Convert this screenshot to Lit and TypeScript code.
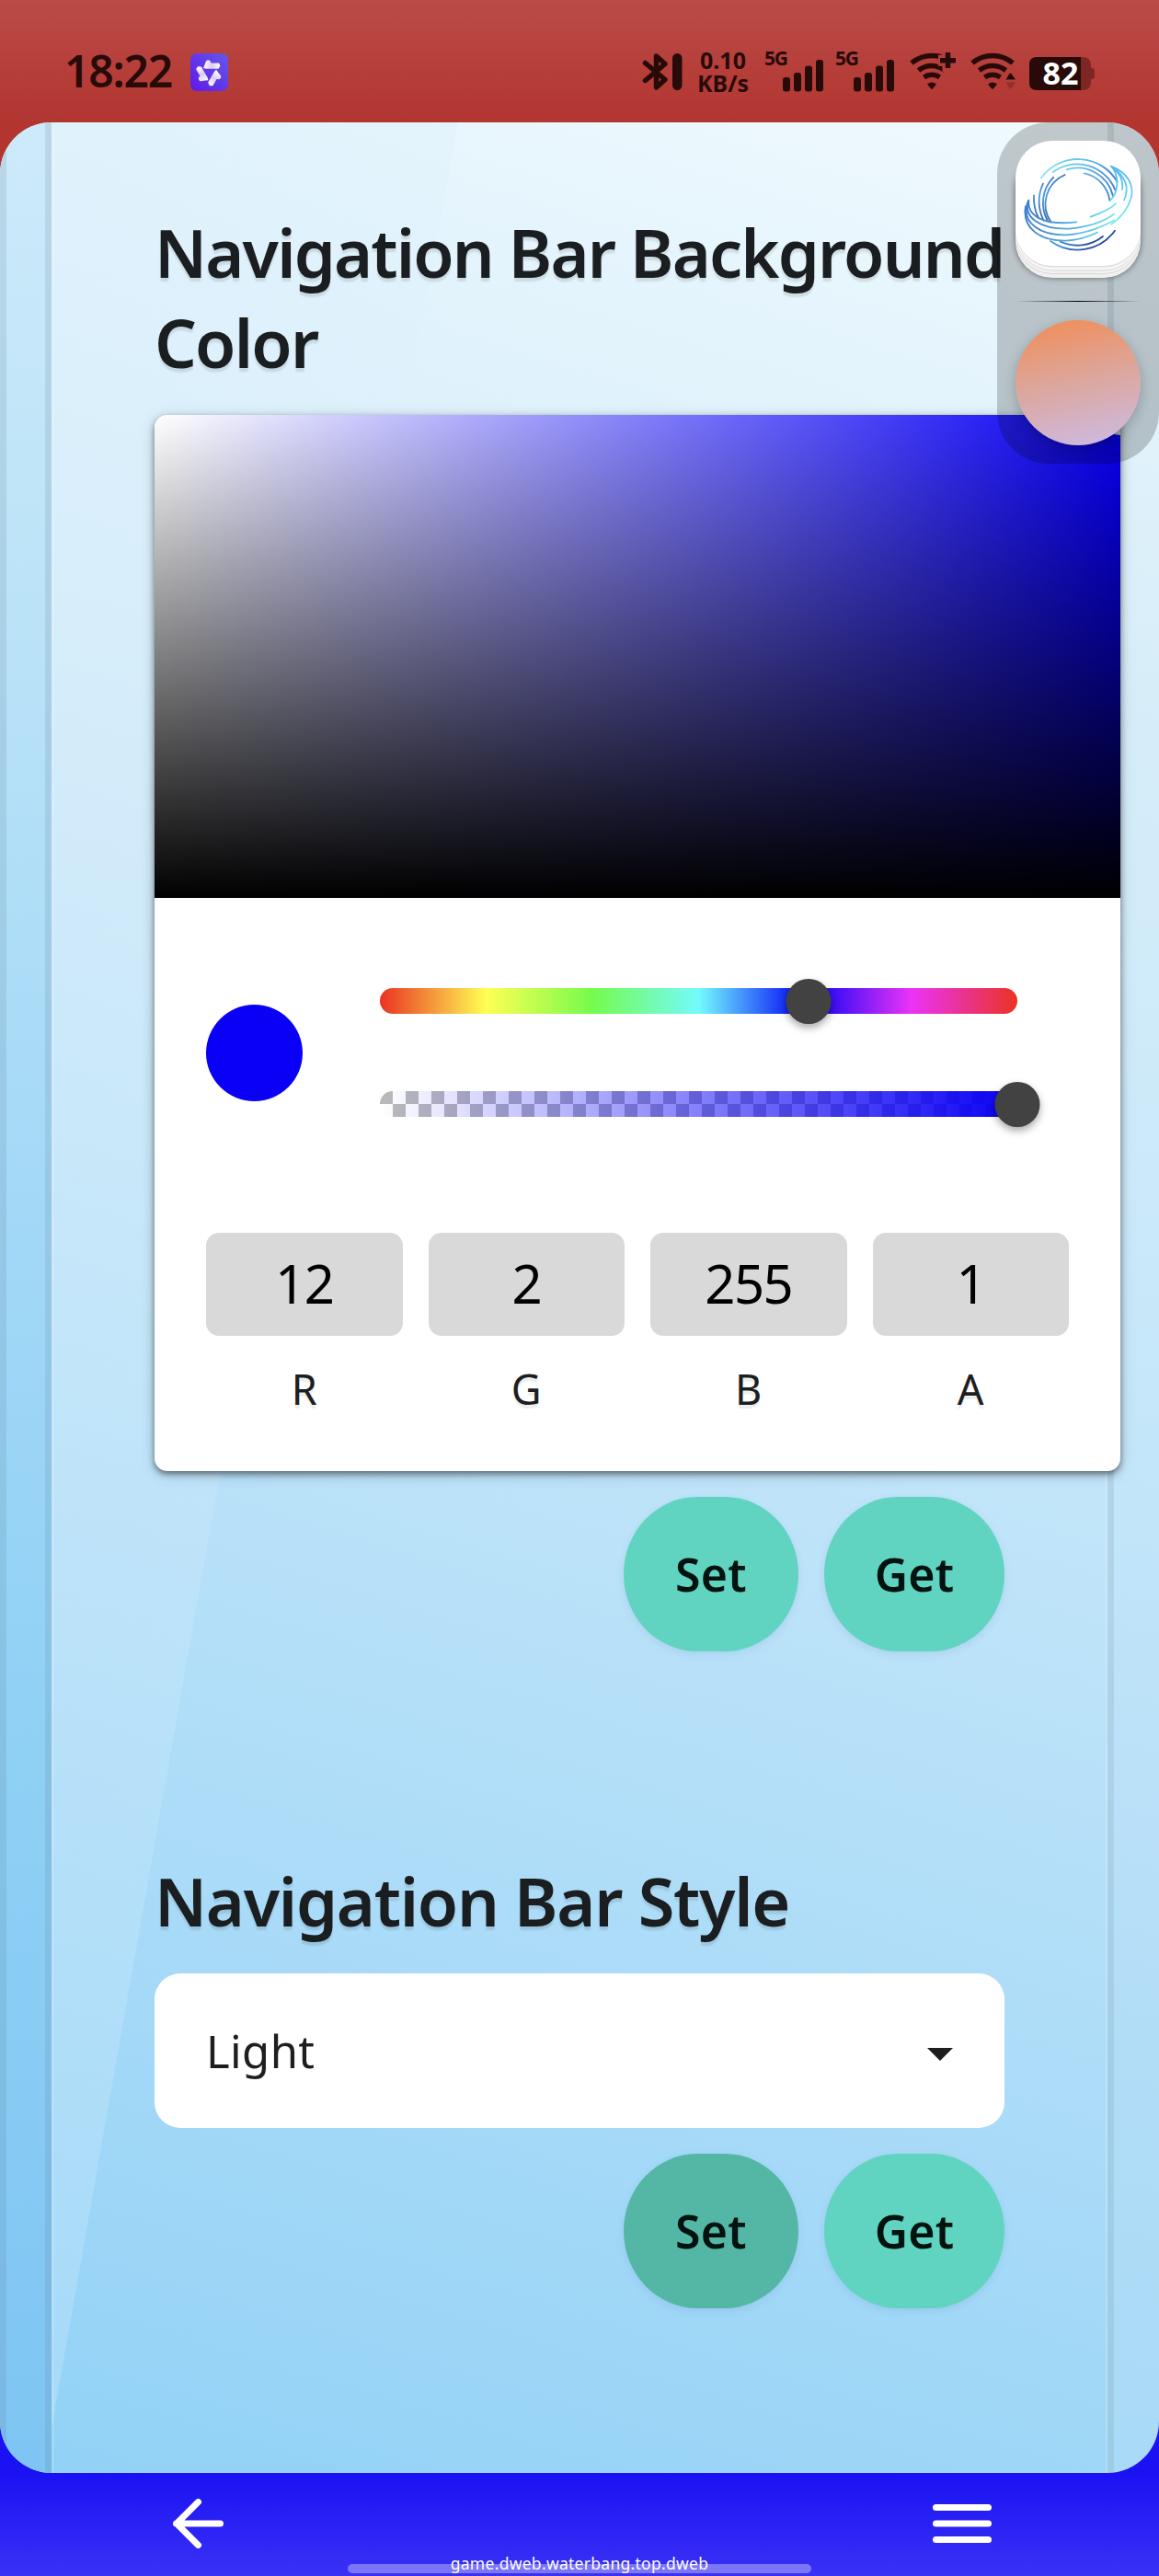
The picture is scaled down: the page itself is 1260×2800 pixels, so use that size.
import { LitElement, html, css, svg } from "lit";
import { customElement, property } from "lit/decorators.js";

/** Cellular strength indicator with a network generation label. */
const cellular = html`<svg class="cell" width="77" height="50" viewBox="0 0 77 50">
  <text x="0" y="21" font-size="21" textLength="26">5G</text>
  <g class="ink">
    <rect x="20" y="34" width="8" height="15.5" rx="3" />
    <rect x="32" y="29" width="8" height="20.5" rx="3" />
    <rect x="44" y="21.5" width="8" height="28" rx="3" />
    <rect x="56" y="15" width="8" height="34.5" rx="3" />
  </g>
</svg>`;

const wifiArcs = svg`
  <path d="M2 11.5A34 34 0 0 1 46 11.5" />
  <path d="M9.5 19.5A23.5 23.5 0 0 1 38.5 19.5" />
  <path d="M15.500 27A15 15 0 0 1 32.500 27" />
  <path class="solid" d="M19 34.500Q24 30.500 29 34.500L24.800 39.500Q24 40.300 23.200 39.500Z" />`;

@customElement("status-bar")
class StatusBar extends LitElement {
  static styles = css`
    :host {
      display: flex;
      align-items: flex-start;
      height: 133px;
      box-sizing: border-box;
      padding-left: 70px;
      background: linear-gradient(#bb4b47, #b23530);
      color: #280b09;
      font-family: "Noto Sans", sans-serif;
    }
    .time { width: 137px; margin-top: 47px; font-size: 48px; font-weight: 600; line-height: 60px; letter-spacing: -1.200px; }
    svg { display: block; flex: none; overflow: visible; }
    .app { margin-top: 58px; }
    .bt { margin: 58px 0 0 451px; }
    text { fill: #280b09; font-weight: 700; }
    .net { margin: 53px 0 0 20px; }
    .cell { margin-top: 50px; }
    .first { display: flex; margin-left: 15px; }
    .ink { fill: #280b09; }
    .line { fill: none; stroke: #280b09; stroke-width: 5.500; }
    .solid { fill: #280b09; stroke: none; }
    .wifi { margin: 57px 0 0 4px; }
    .wifi2 { margin: 57px 0 0 14px; }
    .battery { margin: 62px 0 0 14px; }
    .battery text { fill: #fff; }
  `;
  render() {
    return html`
      <span class="time">18:22</span>
      <svg class="app" width="41" height="41" viewBox="0 0 41 41">
        <defs>
          <linearGradient id="p" x1="0" y1="1" x2="1" y2="0"><stop stop-color="#6018e8" /><stop offset="1" stop-color="#6558ea" /></linearGradient>
          <linearGradient id="w" x1="0" y1="0" x2="1" y2="0"><stop stop-color="#fff" /><stop offset=".5" stop-color="#d9cdfb" /><stop offset="1" stop-color="#fff" /></linearGradient>
        </defs>
        <rect width="41" height="41" rx="7" fill="url(#p)" />
        <g fill="url(#w)">
          ${[0, 120, 240].map((a) => svg`<path transform="rotate(${a} 20.500 21)" d="M14 16L15.500 12.500L17 8.500Q19 6.500 21.500 8L22.500 10.500H31L32.500 13.500L30.500 16.800H17Z" />`)}
        </g>
      </svg>
      <svg class="bt" width="43" height="40" viewBox="0 0 43 40">
        <path class="line" stroke-linejoin="round" stroke-linecap="round" d="M2.500 10.500L24 28.500L14.500 37V3L24 11.500L2.500 29.500" />
        <rect class="ink" x="32" y="0" width="10.500" height="40" rx="5.200" />
      </svg>
      <svg class="net" width="54" height="50" viewBox="0 0 54 50">
        <text x="-1" y="22.300" font-size="25" textLength="50" lengthAdjust="spacingAndGlyphs">0.10</text>
        <text x="-4" y="47.300" font-size="25" textLength="56" lengthAdjust="spacingAndGlyphs">KB/s</text>
      </svg>
      <div class="first">${cellular}${cellular}</div>
      <svg class="wifi" width="52" height="40" viewBox="0 0 52 40">
        <defs><mask id="m"><rect x="-5" width="60" height="45" fill="#fff" /><path d="M31 8.700H54M41.500 -2V21" stroke="#000" stroke-width="12" /></mask></defs>
        <g class="line" mask="url(#m)">${wifiArcs}</g>
        <path class="line" d="M33 8.700H50M41.500 0V17" />
      </svg>
      <svg class="wifi2" width="50" height="40" viewBox="0 0 50 40">
        <defs><mask id="n"><rect x="-5" width="60" height="45" fill="#fff" /><path d="M32 29L41 18L50 29V42H32Z" fill="#000" /></mask></defs>
        <g class="line" mask="url(#n)">${wifiArcs}</g>
        <path class="ink" d="M38.500 29.500L42.500 23Q43.500 22 44.500 23L49 29.500Z" />
        <path class="ink" opacity=".25" d="M38.500 32.500H49L44.500 39Q43.500 40 42.500 39Z" />
      </svg>
      <svg class="battery" width="72" height="36" viewBox="0 0 72 36">
        <path fill="#7d2624" d="M50 0H58Q67 0 67 9V11.500Q71 12 71 15V21Q71 24 67 24.500V27Q67 36 58 36H50Z" />
        <path class="ink" d="M8 0H56V36H8Q0 36 0 28V8Q0 0 8 0Z" />
        <text x="14.500" y="30.300" font-size="34" textLength="39" lengthAdjust="spacingAndGlyphs">82</text>
      </svg>`;
  }
}

@customElement("pill-button")
class PillButton extends LitElement {
  @property({ type: Boolean, reflect: true }) pressed = false;
  static styles = css`
    :host {
      display: flex;
      align-items: center;
      justify-content: center;
      box-sizing: border-box;
      width: 190px;
      height: 168px;
      border-radius: 80px / 84px;
      background: #60d4c0;
      color: #02120e;
      font-size: 50px;
      font-weight: 600;
      letter-spacing: 0.3px;
      box-shadow: 0 3px 8px rgba(70, 110, 170, 0.13);
    }
    :host([wide]) { width: 196px; }
    :host([pressed]) { background: #54b7a6; }
  `;
  render() {
    return html`<slot></slot>`;
  }
}

@customElement("color-picker")
class ColorPicker extends LitElement {
  static styles = css`
    :host {
      position: relative;
      display: block;
      width: 1050px;
      height: 1148px;
      border-radius: 14px;
      background: #fff;
      box-shadow: 0 3px 7px rgba(0, 0, 0, 0.5), 0 4px 18px rgba(0, 0, 0, 0.14);
    }
    .area {
      position: relative;
      height: 525px;
      overflow: hidden;
      border-radius: 14px 14px 0 0;
      background: linear-gradient(to top, #000, transparent), linear-gradient(to right, #fff, rgba(255, 255, 255, 0)), #0800f5;
    }
    .handle { position: absolute; right: -22px; top: -22px; width: 44px; height: 44px; border-radius: 50%; background: #c9c9c9; }
    .body { padding: 56px 56px 0; }
    .controls { display: flex; align-items: center; gap: 84px; height: 224px; }
    .swatch { width: 105px; height: 105px; border-radius: 50%; background: #0a00f5; }
    .sliders { width: 693px; }
    .slot { display: flex; align-items: center; height: 112px; }
    .track { position: relative; width: 693px; height: 28px; border-radius: 14px; }
    .hue { background: linear-gradient(to right, #ea3323, #ffff54 16.700%, #75fb4c 33.300%, #73fbfd 50%, #0000f5 66.700%, #ea33f7 83.300%, #ea3323); }
    .alpha {
      background: linear-gradient(to right, rgba(10, 0, 245, 0), #0a00f5),
        repeating-conic-gradient(#fff 0 25%, #bbb 0 50%) 0 0 / 28px 28px;
    }
    .thumb { position: absolute; top: -10.500px; width: 49px; height: 49px; border-radius: 50%; background: #424242; transform: translateX(-50%); box-shadow: 0 4px 8px rgba(0, 0, 0, 0.35); }
    .fields { display: grid; grid-template-columns: repeat(4, 1fr); gap: 28px; margin-top: 84px; }
    .value { height: 112px; box-sizing: border-box; border-radius: 14px; background: #d9d9d9; color: #000; text-align: center; font-size: 58px; line-height: 110px; letter-spacing: -1.500px; }
    .label { margin-top: 28px; text-align: center; font-size: 45px; line-height: 60px; color: #1d1e1f; text-shadow: 0 4px 1px rgba(0, 0, 0, 0.07); }
  `;
  render() {
    const channels = [["12", "R"], ["2", "G"], ["255", "B"], ["1", "A"]];
    return html`
      <div class="area"><div class="handle"></div></div>
      <div class="body">
        <div class="controls">
          <div class="swatch"></div>
          <div class="sliders">
            <div class="slot"><div class="track hue"><div class="thumb" style="left:67.300%"></div></div></div>
            <div class="slot"><div class="track alpha"><div class="thumb" style="left:100%"></div></div></div>
          </div>
        </div>
        <div class="fields">
          ${channels.map(([v, l]) => html`<div><div class="value">${v}</div><div class="label">${l}</div></div>`)}
        </div>
      </div>`;
  }
}

@customElement("floating-dock")
class FloatingDock extends LitElement {
  static styles = css`
    :host {
      display: flex;
      flex-direction: column;
      align-items: center;
      box-sizing: border-box;
      width: 176px;
      height: 371px;
      padding-top: 20px;
      border-radius: 56px;
      background: rgba(0, 0, 0, 0.2);
    }
    .icon {
      width: 136px;
      height: 136px;
      border-radius: 40px;
      background: #fff;
      box-shadow: 0 1.500px 0 #dedede, 0 4.500px 0 #f6f6f6, 0 5.500px 0 #dadada, 0 8px 0 #f3f3f3, 0 9px 0 #d7d7d7, 0 13px 0 #f0f0f0, 0 13px 6px rgba(0, 0, 0, 0.5);
    }
    svg { display: block; fill: none; stroke-width: 5.500; stroke-linecap: round; }
    .rule { width: 136px; height: 1.500px; margin: 37.500px 0 20px; background: linear-gradient(to right, transparent, #000, transparent); }
    .orb { width: 136px; height: 136px; border-radius: 50%; background: linear-gradient(168deg, #ef9060 8%, #dda598 45%, #cdbbe4 98%); box-shadow: 0 4px 14px rgba(0, 0, 0, 0.22); }
  `;
  render() {
    return html`
      <div class="icon">
        <svg width="136" height="136" viewBox="132 128 408 408">
          <defs>
            <linearGradient id="a" gradientUnits="userSpaceOnUse" x1="215" y1="240" x2="455" y2="300"><stop stop-color="#7fe6f5" /><stop offset=".55" stop-color="#62b8e6" /><stop offset="1" stop-color="#3c7cd0" /></linearGradient>
            <linearGradient id="b" gradientUnits="userSpaceOnUse" x1="280" y1="240" x2="230" y2="395"><stop stop-color="#3e74c4" /><stop offset=".5" stop-color="#4f9ae0" /><stop offset="1" stop-color="#3465b4" /></linearGradient>
            <linearGradient id="c" gradientUnits="userSpaceOnUse" x1="165" y1="380" x2="460" y2="400"><stop stop-color="#3b7dd0" /><stop offset=".5" stop-color="#55a9e0" /><stop offset="1" stop-color="#80e8f6" /></linearGradient>
            <linearGradient id="d" gradientUnits="userSpaceOnUse" x1="450" y1="210" x2="490" y2="390"><stop stop-color="#4fb4ee" /><stop offset="1" stop-color="#80eaf6" /></linearGradient>
            <linearGradient id="e" gradientUnits="userSpaceOnUse" x1="245" y1="0" x2="456" y2="0"><stop stop-color="#4aa0dd" /><stop offset=".5" stop-color="#2c55a8" /><stop offset="1" stop-color="#27479a" /></linearGradient>
          </defs>
          <g stroke="url(#a)">
            <path d="M216 249A148 148 0 0 1 464 262" />
            <path d="M254 230A134 134 0 0 1 457 288" />
            <path d="M299 222A119 119 0 0 1 450 308" />
            <path d="M356 234A104 104 0 0 1 439 322" />
          </g>
          <g stroke="url(#b)">
            <path d="M293 239A104 104 0 0 0 248 394" />
            <path d="M256 247A119 119 0 0 0 238 391" />
            <path d="M222 268A134 134 0 0 0 224 388" />
            <path d="M192 306A148 148 0 0 0 207 380" />
          </g>
          <g stroke="url(#c)">
            <path d="M175 322C170 375 225 405 331 393" />
            <path d="M174 324C158 382 215 419 305 417C375 412 423 389 459 333" stroke-opacity="0" />
            <path d="M174 324C158 382 215 419 305 415C365 411 415 389 439 366" stroke-opacity="0" />
            <path d="M174 324C156 380 215 417 305 415C362 410 415 395 453 367" />
            <path d="M171 330C150 398 216 437 296 435C370 431 420 405 453 388" />
            <path d="M165 342C153 412 210 455 296 454C337 452 372 440 399 427" />
            <path d="M377 376C410 364 440 352 459 333" />
          </g>
          <g stroke="url(#d)">
            <path d="M443 211C497 232 520 271 509 314C499 351 476 378 445 400" />
            <path d="M447 215C490 242 505 280 486 322" />
            <path d="M450 217C476 237 484 258 480 287" />
            <path d="M450 216C472 256 466 298 440 324" />
          </g>
          <g stroke="url(#e)">
            <path d="M246 455A150 150 0 0 0 456 421" />
            <path d="M278 457A134 134 0 0 0 417 440" />
          </g>
        </svg>
      </div>
      <div class="rule"></div>
      <div class="orb"></div>`;
  }
}

@customElement("app-root")
class AppRoot extends LitElement {
  static styles = css`
    :host { display: block; width: 1260px; height: 2800px; overflow: hidden; font-family: "Noto Sans", sans-serif; }
    .frame { height: 2555px; background: linear-gradient(#b23530 50%, #1a12f3 50%); }
    .screen {
      position: relative;
      display: flex;
      height: 2555px;
      overflow: hidden;
      border-radius: 56px;
      background: linear-gradient(195deg, #eef8fd 0%, #d8eef9 20%, #c8e8fa 45%, #b0dcf7 75%, #a2d8f6 100%);
    }
    .edge { flex: none; width: 42px; border: 0 solid rgba(90, 120, 140, 0.16); border-width: 0 7px; background: linear-gradient(#cdeafa, #c0e5f8 15%, #a4d9f7 45%, #8fd0f5 70%, #7ec5f3); background-clip: border-box; background-origin: border-box; }
    .panel {
      box-sizing: border-box;
      flex: none;
      width: 1148px;
      padding: 92px 112px 0;
      background: linear-gradient(197deg, #f0fafe 0%, #e2f3fc 14%, #d2ebfa 34%, #bfe4f9 55%, #aadbf8 76%, #92d2f6 100%);
      position: relative;
      box-shadow: inset -2px 0 rgba(255, 255, 255, 0.2), inset 3px 0 rgba(255, 255, 255, 0.12);
    }
    .right { flex: 1; border-left: 7px solid rgba(100, 130, 150, 0.16); background: transparent; }
    .ray { position: absolute; inset: 0; }
    .content { position: relative; }
    h2 { margin: 0 0 30px; font-size: 72px; font-weight: 600; line-height: 98px; letter-spacing: -1.820px; color: #1b1e20; text-shadow: 0 4px 2px rgba(0, 0, 0, 0.1); white-space: nowrap; }
    .second { margin-top: 222px; letter-spacing: -1.250px; }
    .actions { display: flex; justify-content: flex-end; gap: 28px; margin-top: 28px; }
    .select { display: flex; align-items: center; justify-content: space-between; box-sizing: border-box; height: 168px; padding: 0 56px; border-radius: 28px; background: #fff; font-size: 49px; color: #1d1e1f; letter-spacing: 0.400px; }
    .select svg { margin-top: 8px; }
    .dock { position: absolute; top: 0; right: 0; }
    .nav {
      position: relative;
      display: flex;
      justify-content: space-between;
      box-sizing: border-box;
      height: 112px;
      padding: 28px 182px 0 188px;
      background: linear-gradient(#1a12f3, #3a31f5);
    }
    .nav svg { display: block; fill: none; stroke: #fff; stroke-width: 7; stroke-linecap: round; stroke-linejoin: round; }
    .home { position: absolute; left: 378px; top: 99px; width: 504px; height: 10px; border-radius: 5px; background: rgba(255, 255, 255, 0.34); }
    .host { position: absolute; left: 0; right: 0; top: 87px; text-align: center; font-size: 17.500px; line-height: 22px; letter-spacing: 0.280px; color: #fff; }
  `;
  render() {
    return html`
      <status-bar></status-bar>
      <div class="frame">
        <div class="screen">
          <div class="edge"></div>
          <div class="panel">
            <svg class="ray" width="1148" height="2555" viewBox="56 133 1148 2555">
              <defs><linearGradient id="r" x1="0" y1="0" x2="0" y2="1"><stop stop-color="#c2e4fb" stop-opacity=".12" /><stop offset=".3" stop-color="#fff" stop-opacity=".06" /><stop offset="1" stop-color="#fff" stop-opacity=".17" /></linearGradient></defs>
              <path fill="url(#r)" d="M56 133H498L56 2640Z" />
            </svg>
            <div class="content">
              <h2>Navigation Bar Background<br />Color</h2>
              <color-picker></color-picker>
              <div class="actions">
                <pill-button>Set</pill-button>
                <pill-button wide>Get</pill-button>
              </div>
              <h2 class="second">Navigation Bar Style</h2>
              <div class="select">
                <span>Light</span>
                <svg width="28" height="14" viewBox="0 0 28 14"><path fill="#1d1e1f" d="M0 0H28L14 14Z" /></svg>
              </div>
              <div class="actions">
                <pill-button pressed>Set</pill-button>
                <pill-button wide>Get</pill-button>
              </div>
            </div>
          </div>
          <div class="right"></div>
          <floating-dock class="dock"></floating-dock>
        </div>
      </div>
      <div class="nav">
        <svg width="55" height="54" viewBox="0 0 55 54"><path d="M51.500 27H3.500M27.500 3.500L4 27L27.500 50.500" /></svg>
        <svg width="64" height="54" viewBox="0 0 64 54"><path d="M3.500 9.500H60.500M3.500 27H60.500M3.500 44.500H60.500" /></svg>
        <div class="home"></div>
        <div class="host">game.dweb.waterbang.top.dweb</div>
      </div>`;
  }
}
